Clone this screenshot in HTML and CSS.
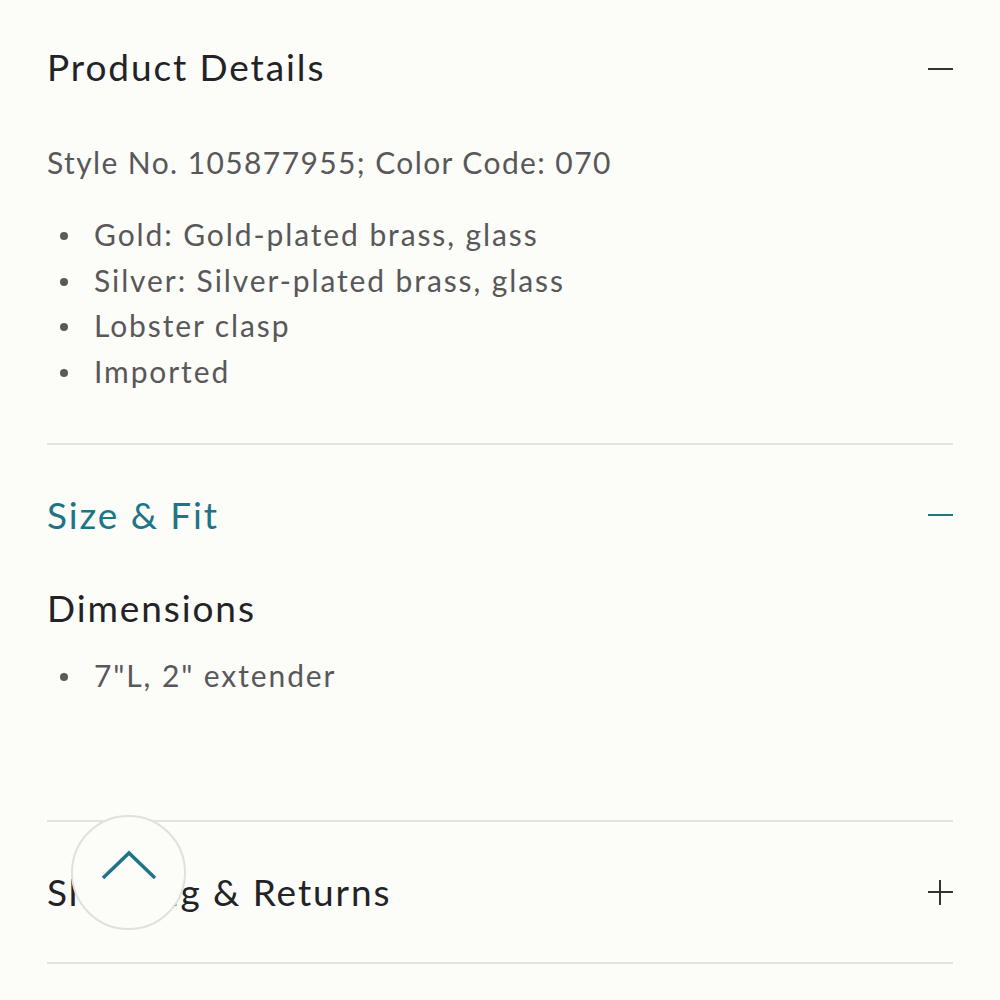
FILE: index.html
```html
<!DOCTYPE html>
<html>
<head>
<meta charset="utf-8">
<link rel="stylesheet" href="styles.css">
</head>
<body>
<div class="page">
  <section class="acc first">
    <div class="acc-head">
      <h2 class="acc-title">Product Details</h2>
      <span class="icon minus"></span>
    </div>
    <div class="acc-body">
      <p class="style-no">Style No. 105877955; Color Code: 070</p>
      <ul class="bullets">
        <li>Gold: Gold-plated brass, glass</li>
        <li>Silver: Silver-plated brass, glass</li>
        <li>Lobster clasp</li>
        <li>Imported</li>
      </ul>
    </div>
  </section>
  <section class="acc open">
    <div class="acc-head">
      <h2 class="acc-title teal">Size &amp; Fit</h2>
      <span class="icon minus teal-bg"></span>
    </div>
    <div class="acc-body size">
      <h3 class="sub">Dimensions</h3>
      <ul class="bullets dims">
        <li>7"L, 2" extender</li>
      </ul>
    </div>
  </section>
  <section class="acc last">
    <div class="acc-head">
      <h2 class="acc-title">Shipping &amp; Returns</h2>
      <span class="icon plus"></span>
    </div>
  </section>
</div>
<button class="to-top" aria-label="Back to top">
  <svg width="58" height="34" viewBox="0 0 58 34"><polyline points="3,29 29,4 55,29" fill="none" stroke="#1f7588" stroke-width="3.5"/></svg>
</button>
</body>
</html>
```
FILE: styles.css
```css
html, body { margin: 0; padding: 0; }
body {
  background: #fcfcf8;
  font-family: Lato, "Noto Sans", sans-serif;
  color: #222;
}
.page { padding: 0 47px; }
.acc { border-bottom: 2px solid #e3e3df; }
.acc-head {
  display: flex;
  align-items: center;
  justify-content: space-between;
  height: 140px;
}
.first .acc-head { height: 132px; }
.acc-title {
  margin: 0;
  font-size: 37px;
  font-weight: 400;
  letter-spacing: 1.9px;
  color: #222326;
}
.teal { color: #1f7588; }
.icon { position: relative; width: 25px; height: 25px; display: block; }
.minus::before, .plus::before, .plus::after {
  content: "";
  position: absolute;
  background: #333;
}
.minus::before, .plus::before { left: 0; right: 0; top: 12px; height: 2px; }
.plus::after { top: 1px; bottom: -1px; left: 11px; width: 2px; }
.first .minus::before { top: 14px; }
.teal-bg::before { background: #1f7588; }
.acc-body { color: #58585b; }
.first .acc-body { padding: 7px 0 48px; }
.style-no { margin: 0; font-size: 30px; line-height: 46px; letter-spacing: 1.4px; }
.bullets { list-style: none; margin: 27px 0 0; padding: 0; font-size: 30px; line-height: 45.7px; letter-spacing: 1.9px; }
.bullets li { position: relative; padding-left: 47px; }
.bullets li::before {
  content: "";
  position: absolute;
  left: 13px;
  top: 50%;
  width: 8px;
  height: 8px;
  margin-top: -3px;
  border-radius: 50%;
  background: #5a5a5c;
}
.size { padding: 0 0 121px; }
.sub { margin: 0; font-size: 37px; font-weight: 400; line-height: 46px; letter-spacing: 1.9px; color: #222326; }
.dims { margin-top: 22px; }
.to-top {
  position: absolute;
  left: 71px;
  top: 815px;
  width: 115px;
  height: 115px;
  border-radius: 50%;
  border: 2px solid #e0e0dc;
  background: #fcfcf8;
  display: flex;
  align-items: center;
  justify-content: center;
  padding: 0 0 14px;
}
```
